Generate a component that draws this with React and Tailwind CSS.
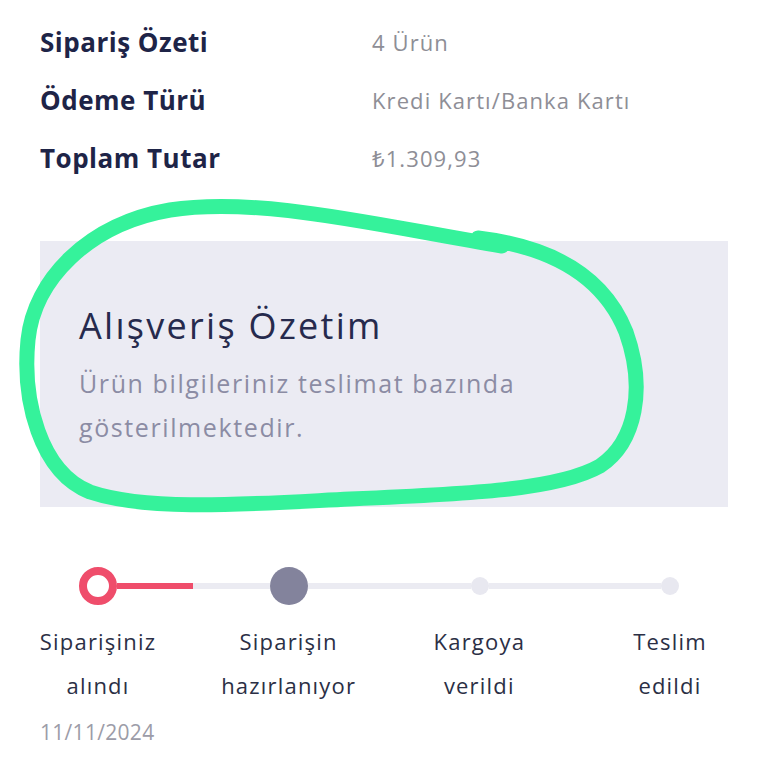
import React from "react";

const rows = [
  { label: "Sipariş Özeti", value: "4 Ürün" },
  { label: "Ödeme Türü", value: "Kredi Kartı/Banka Kartı" },
  { label: "Toplam Tutar", value: "₺1.309,93" },
];

const steps = [
  ["Siparişiniz", "alındı"],
  ["Siparişin", "hazırlanıyor"],
  ["Kargoya", "verildi"],
  ["Teslim", "edildi"],
];

function Scribble() {
  // green marker loop drawn over the summary box
  return (
    <svg
      className="pointer-events-none absolute left-0 top-0"
      width="768"
      height="768"
      viewBox="0 0 768 768"
      fill="none"
    >
      <path
        d="M478 238 C545 246 602 272 626 332 C646 388 636 442 600 466 C558 490 468 494 350 499 C250 504 150 512 90 492 C40 472 22 400 28 340 C34 280 88 224 170 210 C260 196 380 226 502 246"
        stroke="#35f29b"
        strokeWidth="15"
        strokeLinecap="round"
        strokeLinejoin="round"
      />
    </svg>
  );
}

export default function App() {
  return (
    <div
      className="relative h-[768px] w-[768px] overflow-hidden bg-white px-10"
      style={{ fontFamily: '"Open Sans", "Noto Sans", sans-serif' }}
    >
      {/* Order summary rows */}
      <div className="pt-[13px]">
        {rows.map((r) => (
          <div key={r.label} className="flex h-[58px] items-center">
            <div className="w-[332px] text-[26px] font-bold tracking-[0.5px] text-[#1e2447]">{r.label}</div>
            <div className="text-[22px] tracking-[1.1px] text-[#8e8e96]">{r.value}</div>
          </div>
        ))}
      </div>

      {/* Info box */}
      <div className="mt-[54px] h-[266px] bg-[#ebebf3] pl-[39px] pt-[62px]">
        <div className="text-[36px] leading-[46px] tracking-[2.3px] text-[#262a4d]">Alışveriş Özetim</div>
        <div className="mt-[12px] text-[25px] leading-[44px] tracking-[1.6px] text-[#8b8ca4]">
          Ürün bilgileriniz teslimat bazında
          <br />
          gösterilmektedir.
        </div>
      </div>

      {/* Stepper track */}
      <div className="ml-[39px] mr-[49px] mt-[60px] flex h-[38px] items-center">
        <div className="h-[38px] w-[38px] shrink-0 rounded-full border-[8px] border-[#ef4d6b] bg-white" />
        <div className="h-[6px] w-[76px] bg-[#ef4d6b]" />
        <div className="h-[6px] w-[77px] bg-[#ebebf2]" />
        <div className="h-[38px] w-[38px] shrink-0 rounded-full bg-[#83839c]" />
        <div className="h-[6px] w-[163px] bg-[#ebebf2]" />
        <div className="h-[18px] w-[18px] shrink-0 rounded-full bg-[#e8e8f0]" />
        <div className="h-[6px] flex-1 bg-[#ebebf2]" />
        <div className="h-[18px] w-[18px] shrink-0 rounded-full bg-[#e8e8f0]" />
      </div>

      {/* Step labels */}
      <div className="mt-[14px] flex justify-between">
        {steps.map((s) => (
          <div key={s[0]} className="flex w-[116px] flex-col items-center">
            {s.map((line) => (
              <div key={line} className="whitespace-nowrap text-[22px] leading-[44px] tracking-[1.2px] text-[#2b2f45]">
                {line}
              </div>
            ))}
          </div>
        ))}
      </div>

      <div className="mt-[11px] text-[21px] leading-[28px] tracking-[0.3px] text-[#9c9ca8]">11/11/2024</div>

      <Scribble />
    </div>
  );
}
